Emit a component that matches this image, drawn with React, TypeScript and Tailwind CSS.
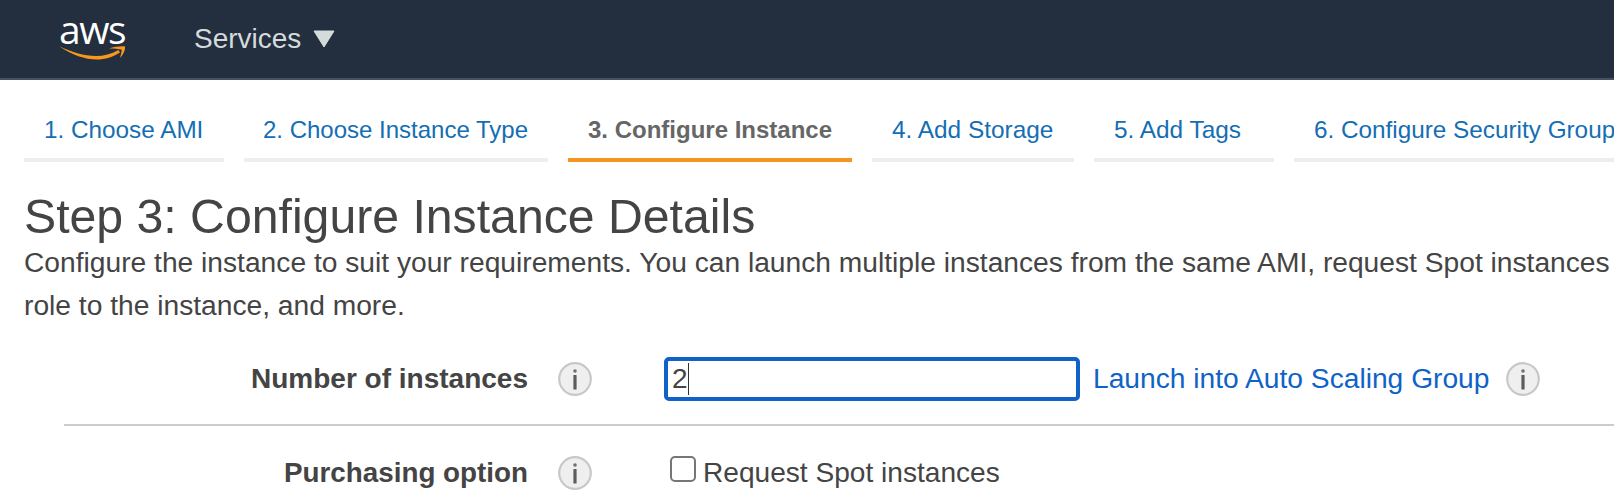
const font = "font-['Liberation_Sans',Arial,sans-serif]";

function Info({ className = "" }: { className?: string }) {
  return (
    <svg width="36" height="36" viewBox="0 0 36 36" className={`shrink-0 ${className}`}>
      <circle cx="18" cy="18" r="15.8" fill="#efefef" stroke="#c8c8c8" strokeWidth="2.2" />
      <circle cx="18" cy="10" r="1.8" fill="#707070" />
      <rect x="16.4" y="14" width="3.2" height="14.5" rx="0.6" fill="#5c5c5c" />
    </svg>
  );
}

const tabs = [
  { label: "1. Choose AMI", w: "w-[200px]", pl: "pl-[20px] text-[24.3px]" },
  { label: "2. Choose Instance Type", w: "w-[304px]", pl: "pl-[19px] text-[24px]" },
  { label: "3. Configure Instance", w: "w-[284px]", pl: "pl-[20px] text-[24px]", active: true },
  { label: "4. Add Storage", w: "w-[202px]", pl: "pl-[20px] text-[24.4px]" },
  { label: "5. Add Tags", w: "w-[180px]", pl: "pl-[20px] text-[24.4px]" },
  { label: "6. Configure Security Group", w: "w-[340px]", pl: "pl-[20px] text-[24.3px]" },
];

export default function App() {
  return (
    <div className={`w-[1614px] h-[504px] overflow-hidden bg-white text-[#444444] ${font}`}>
      <header className="h-[80px] bg-[#232f3e] border-b-2 border-[#4a5260] flex items-center">
        <div className="w-[194px] shrink-0 flex flex-col items-center pr-[10px] -mt-[4px]">
          <span className="text-[39px] leading-[30px] font-medium text-white tracking-[-1.5px] font-['Open_Sans',sans-serif]">aws</span>
          <svg width="68" height="17" viewBox="0 0 68 17">
            <path d="M1 2 C14 11 27 15.5 39 15.5 C47 15.5 55 13 62 8.5 L60.5 6 C53 10 46 12 38 12 C26 12 13 8 1 2 Z" fill="#f7981d" />
            <path d="M51 4.5 C56 3 63 2 67 2.5 C67.5 6 65 11 62 14 C63 10 64 7 63.5 5.5 C61 5 56 4.5 51 4.5 Z" fill="#f7981d" />
          </svg>
        </div>
        <span className="text-[28px] text-[#d5dbdb]">Services</span>
        <svg width="22" height="18" viewBox="0 0 22 18" className="ml-[12px]">
          <path d="M1 1 H21 L11 17 Z" fill="#d5dbdb" stroke="#d5dbdb" strokeLinejoin="round" />
        </svg>
      </header>

      <nav className="flex gap-[20px] pl-[24px] mt-[28px] w-[1800px]">
        {tabs.map((t) => (
          <div
            key={t.label}
            className={`${t.w} ${t.pl} shrink-0 h-[54px] pt-[7px] border-b-4 leading-[30px] whitespace-nowrap ${
              t.active ? "border-[#f8931f] font-bold text-[#666666]" : "border-[#eeeeee] text-[#146eb4]"
            }`}
          >
            {t.label}
          </div>
        ))}
      </nav>

      <h1 className="ml-[24px] mt-[26px] text-[48.2px] leading-[56px] font-normal text-[#444444]">
        Step 3: Configure Instance Details
      </h1>
      <p className="ml-[24px] -mt-[3px] w-[1640px] text-[28.2px] leading-[43px] text-[#444444]">
        Configure the instance to suit your requirements. You can launch multiple instances from the same AMI, request Spot instances
        <br />
        role to the instance, and more.
      </p>

      <div className="mt-[29px] flex items-center h-[46px]">
        <label className="w-[528px] shrink-0 text-right text-[28px] font-bold">Number of instances</label>
        <Info className="ml-[29px]" />
        <div className="ml-[71px] w-[416px] h-[44px] shrink-0 border-[4px] border-[#0f62c6] rounded-[5px] flex items-center pl-[4px] text-[28px]">
          2<span className="w-[1.5px] h-[32px] bg-[#333333]" />
        </div>
        <a className="ml-[13px] -mt-[2px] text-[28.2px] text-[#0f62c6] whitespace-nowrap">Launch into Auto Scaling Group</a>
        <Info className="ml-[16px]" />
      </div>

      <div className="ml-[64px] mt-[22px] h-[2px] bg-[#cccccc]" />

      <div className="mt-[24px] flex items-center h-[46px]">
        <label className="w-[528px] shrink-0 text-right text-[27.8px] font-bold">Purchasing option</label>
        <Info className="ml-[29px]" />
        <span className="ml-[77px] w-[26px] h-[26px] shrink-0 -mt-[8px] border-2 border-[#767676] rounded-[5px] bg-white" />
        <span className="ml-[7px] text-[28.1px]">Request Spot instances</span>
      </div>
    </div>
  );
}
